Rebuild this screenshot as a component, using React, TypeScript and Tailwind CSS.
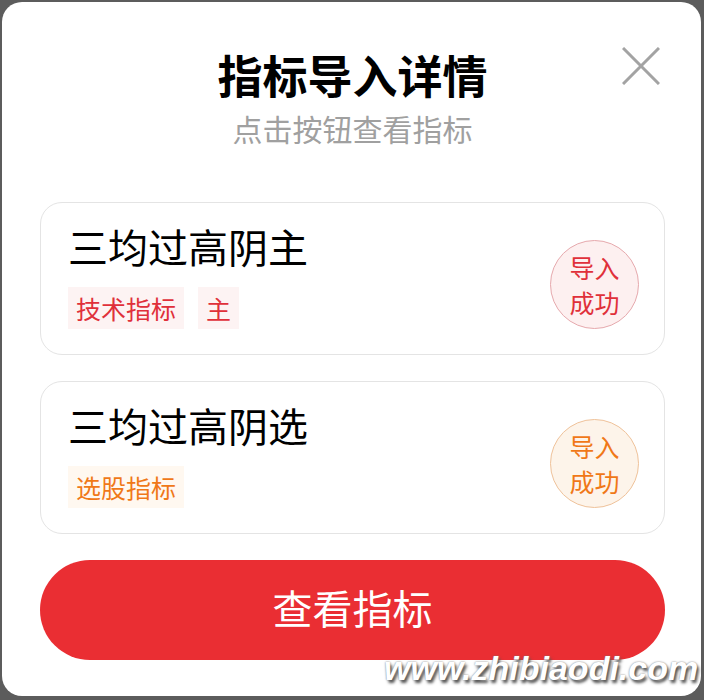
import React from "react";

type Item = {
  name: string;
  tags: string[];
  tone: "red" | "orange";
};

const items: Item[] = [
  { name: "三均过高阴主", tags: ["技术指标", "主"], tone: "red" },
  { name: "三均过高阴选", tags: ["选股指标"], tone: "orange" },
];

const toneClass = {
  red: {
    tag: "bg-[#fdf3f3] text-[#e0303a]",
    badge: "border-[#e6a9ad] bg-[#fdf0f0] text-[#e0303a]",
  },
  orange: {
    tag: "bg-[#fff8f0] text-[#f07818]",
    badge: "border-[#efc29a] bg-[#fdf4ea] text-[#f07818]",
  },
};

const IndicatorCard = ({ item }: { item: Item }) => {
  const tone = toneClass[item.tone];
  return (
    <div className="flex h-[153px] items-center justify-between rounded-[22px] border border-[#e4e4e4] pl-[27px] pr-[25px]">
      <div className="flex flex-col self-start pt-[23px]">
        <div className="text-[40px] leading-[40px] text-black">{item.name}</div>
        <div className="mt-[21px] flex gap-[14px]">
          {item.tags.map((t) => (
            <span
              key={t}
              className={`flex h-[42px] items-center px-[8px] text-[25px] leading-none ${tone.tag}`}
            >
              {t}
            </span>
          ))}
        </div>
      </div>
      <div
        className={`mt-[12px] flex h-[89px] w-[89px] flex-col items-center justify-center rounded-full border text-[25px] leading-[35px] ${tone.badge}`}
      >
        <span>导入</span>
        <span>成功</span>
      </div>
    </div>
  );
};

export default function App() {
  return (
    <div
      className="relative h-[700px] w-[704px] overflow-hidden bg-[#5c5c5c] pt-[2px] pl-[2px]"
      style={{ fontFamily: '"Noto Sans CJK SC", "Noto Sans", sans-serif' }}
    >
      <div className="relative flex h-[694px] w-[699px] flex-col rounded-[20px] bg-white pl-[38px] pr-[36px]">
        {/* close button */}
        <button className="absolute right-[41px] top-[45px] h-[38px] w-[38px]">
          <svg viewBox="0 0 38 38" className="h-full w-full">
            <path d="M1 1 L37 37 M37 1 L1 37" stroke="#a3a3a3" strokeWidth="3" fill="none" />
          </svg>
        </button>

        <div className="pt-[50px] text-center text-[45px] font-bold leading-[45px] text-black">
          指标导入详情
        </div>
        <div className="mt-[16px] text-center text-[30px] leading-[30px] text-[#a0a0a0]">
          点击按钮查看指标
        </div>

        <div className="mt-[59px] flex flex-col gap-[26px]">
          {items.map((it) => (
            <IndicatorCard key={it.name} item={it} />
          ))}
        </div>

        <button className="mt-[26px] flex h-[100px] items-center justify-center rounded-full bg-[#ea2e33] pb-[6px] text-[40px] text-white">
          查看指标
        </button>
      </div>

      <div
        className="absolute left-[384px] top-[643px] text-[34px] font-bold italic text-white"
        style={{
          fontFamily: '"Liberation Sans", sans-serif',
          textShadow: "2px 3px 3px #555, 0 0 2px #777",
        }}
      >
        www.zhibiaodi.com
      </div>
    </div>
  );
}
